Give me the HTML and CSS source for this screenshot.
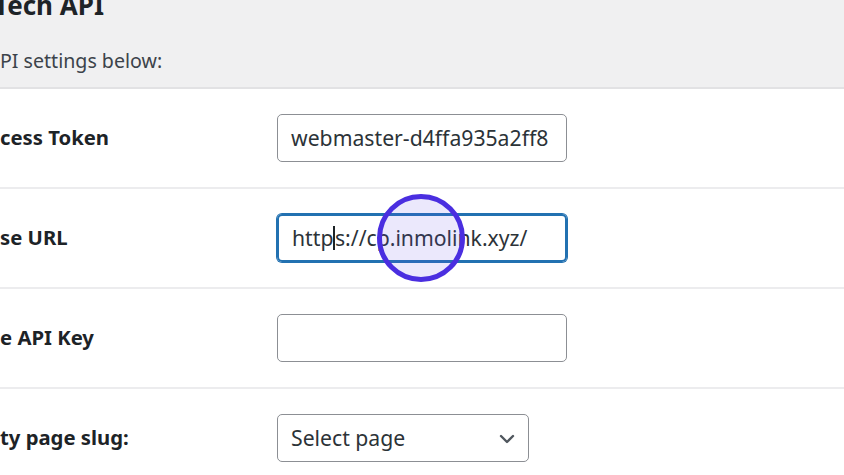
FILE: index.html
```html
<!DOCTYPE html>
<html>
<head>
<meta charset="utf-8">
<link rel="stylesheet" href="styles.css">
</head>
<body>
<div class="page">
  <header class="head">
    <h1 class="title">Tech API</h1>
    <p class="intro">PI settings below:</p>
  </header>
  <div class="form">
    <div class="row">
      <div class="label">cess Token</div>
      <div class="field"><div class="input">webmaster-d4ffa935a2ff8</div></div>
    </div>
    <div class="row">
      <div class="label">se URL</div>
      <div class="field"><div class="input focus">http<span class="caret"></span>s://cp.inmolink.xyz/</div>
        <span class="ring"></span>
      </div>
    </div>
    <div class="row">
      <div class="label">e API Key</div>
      <div class="field"><div class="input"></div></div>
    </div>
    <div class="row">
      <div class="label">ty page slug:</div>
      <div class="field"><div class="input select">Select page
        <svg class="chev" width="16" height="10" viewBox="0 0 16 10"><path d="M2 2 L8 8 L14 2" fill="none" stroke="#50575e" stroke-width="2.4" stroke-linecap="round" stroke-linejoin="round"/></svg>
      </div></div>
    </div>
  </div>
</div>
</body>
</html>
```
FILE: styles.css
```css
html, body {
  margin: 0;
  padding: 0;
  background: #fff;
  overflow: hidden;
}
.page {
  width: 844px;
  height: 475px;
  font-family: "Noto Sans", "Open Sans", sans-serif;
  color: #1d2327;
}
.head {
  background: #f0f0f1;
  border-bottom: 2px solid #e2e2e4;
  box-sizing: border-box;
  height: 89px;
  overflow: hidden;
}
.title {
  margin: 0;
  font-size: 26px;
  font-weight: 700;
  line-height: 30px;
  margin-top: -10px;
  margin-left: -6px;
  color: #1d2327;
}
.intro {
  margin: 0;
  margin-top: 27px;
  font-size: 19.6px;
  line-height: 28px;
  color: #3c434a;
}
.row {
  display: flex;
  align-items: center;
  height: 100px;
  border-bottom: 2px solid #ececee;
  box-sizing: border-box;
}
.label {
  width: 277px;
  font-size: 20.3px;
  font-weight: 700;
  color: #1d2327;
  padding-bottom: 3px;
}
.field {
  position: relative;
}
.input {
  width: 290px;
  height: 48px;
  box-sizing: border-box;
  border: 1.5px solid #8c8f94;
  border-radius: 5px;
  padding-left: 13px;
  padding-bottom: 1px;
  display: flex;
  align-items: center;
  font-size: 21.2px;
  color: #2c3338;
  white-space: nowrap;
}
.focus {
  border: 2px solid #2271b1;
  box-shadow: 0 0 0 1px #2271b1;
}
.caret {
  display: inline-block;
  width: 1.5px;
  height: 24px;
  background: #1d2327;
}
.select {
  width: 252px;
  position: relative;
}
.chev {
  position: absolute;
  right: 13px;
  top: 19px;
}
.ring {
  position: absolute;
  left: 100px;
  top: -20px;
  width: 88px;
  height: 88px;
  box-sizing: border-box;
  border: 5px solid #4a2ee0;
  border-radius: 50%;
  background: rgba(100, 80, 230, 0.13);
}
```
